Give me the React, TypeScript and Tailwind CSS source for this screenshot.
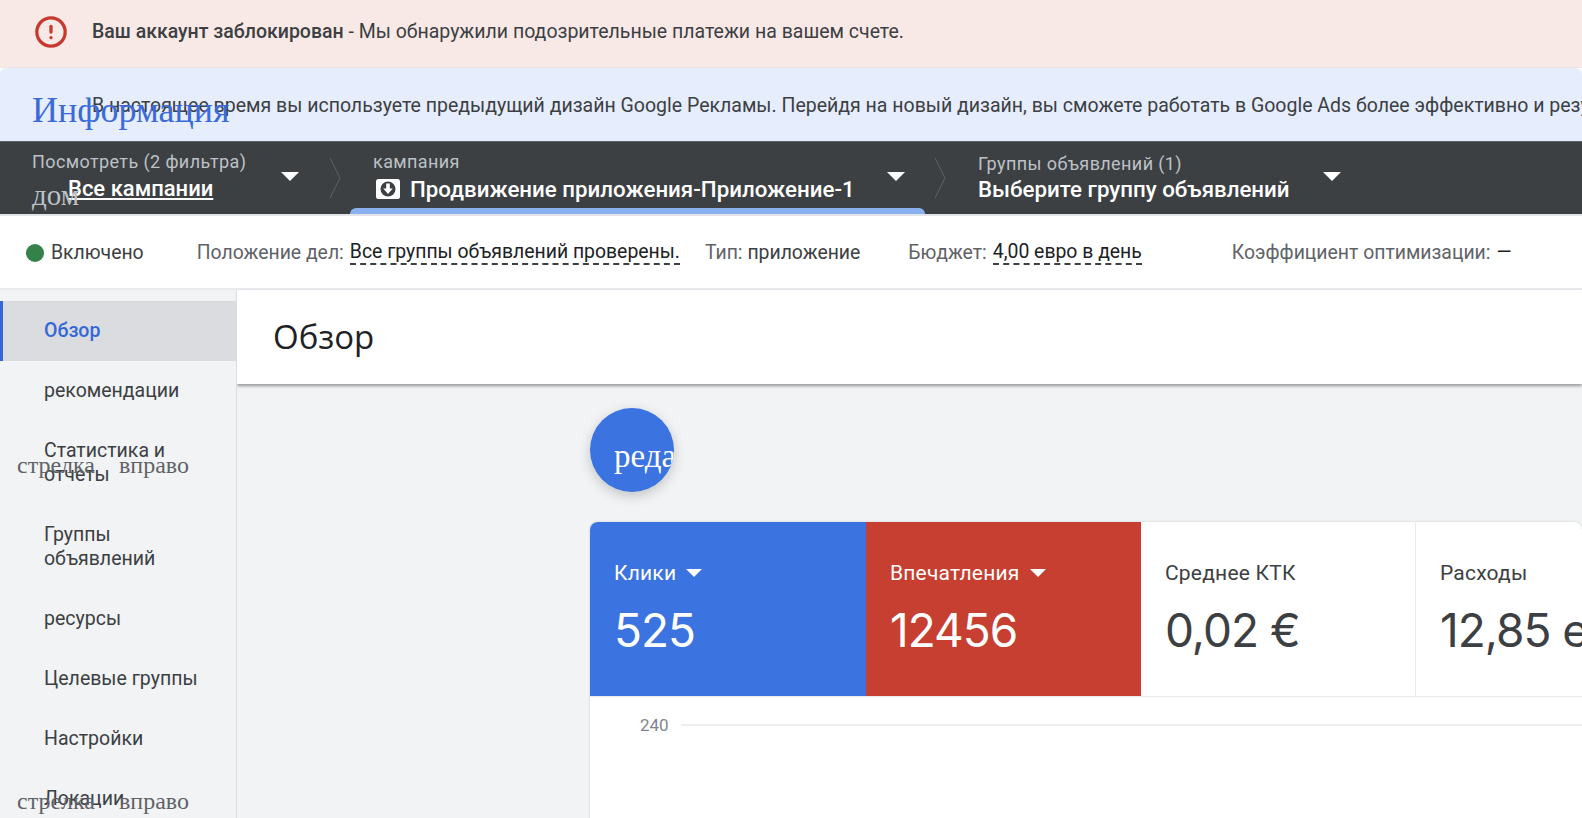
import { CircleAlert } from 'lucide-react'

const navItems = [
  { label: 'рекомендации' },
  { label: 'Статистика и отчеты', double: true, arrow: true },
  { label: 'Группы объявлений', double: true },
  { label: 'ресурсы' },
  { label: 'Целевые группы' },
  { label: 'Настройки' },
  { label: 'Локации', arrow: true },
]

function Caret({ className }: { className?: string }) {
  return (
    <svg className={className} width="18" height="9" viewBox="0 0 18 9" fill="currentColor">
      <path d="M0 0h18L9 9z" />
    </svg>
  )
}

function Crumb() {
  return (
    <svg className="shrink-0" width="12" height="42" viewBox="0 0 12 42" fill="none" stroke="#5f6368" strokeWidth="1">
      <path d="M1 1l10 20L1 41" />
    </svg>
  )
}

function Metric({ label, value, tone, caret }: { label: string; value: string; tone: string; caret?: boolean }) {
  return (
    <div className={`flex h-full shrink-0 flex-col pl-6 pt-[39px] ${tone}`}>
      <div className="flex items-center gap-[10px] text-[21px] leading-6 tracking-[0.2px]">
        <span>{label}</span>
        {caret && <Caret className="h-2 w-4" />}
      </div>
      <div className="mt-[17px] font-['Inter',sans-serif] text-[46px] leading-[56px] font-normal tracking-[-1px] whitespace-nowrap">{value}</div>
    </div>
  )
}

export default function App() {
  return (
    <div className="flex h-[818px] w-full flex-col overflow-hidden bg-white font-['Roboto',sans-serif] text-[19.5px] text-[#3c4043]">
      <div className="flex h-[68px] shrink-0 items-center border-b border-[#ece4e6] bg-[#f9e9e6] pb-[4px]">
        <CircleAlert className="ml-[34px] text-[#c5392f]" size={34} strokeWidth={2.3} />
        <div className="ml-[24px] pt-[1px] whitespace-nowrap">
          <span className="font-medium">Ваш аккаунт заблокирован</span> - Мы обнаружили подозрительные платежи на вашем счете.
        </div>
      </div>

      <div className="relative flex h-[73px] shrink-0 items-center overflow-hidden rounded-t-md bg-[#e6edfc] pt-[3px] pl-[92px]">
        <div className="whitespace-nowrap">
          В настоящее время вы используете предыдущий дизайн Google Рекламы. Перейдя на новый дизайн, вы сможете работать в Google Ads более эффективно и результативно.
        </div>
        <span className="absolute top-[22px] left-[32px] font-['Liberation_Serif',serif] text-[36px] leading-10 text-[#3a6bd8]">Информация</span>
      </div>

      <div className="flex h-[73px] shrink-0 items-center overflow-hidden border-t border-[#5f6368] bg-[#3c4043] text-white">
        <div className="relative flex h-full w-[329px] shrink-0 pl-8">
          <div className="flex flex-col pt-[8px]">
            <span className="text-[18px] leading-6 tracking-[0.4px] text-[#bdc1c6]">Посмотреть (2 фильтра)</span>
            <a className="mt-[3px] ml-9 text-[22px] leading-6 font-medium underline underline-offset-2">Все кампании</a>
          </div>
          <Caret className="absolute top-[30px] left-[281px]" />
          <span className="absolute top-[37px] left-[32px] font-['Liberation_Serif',serif] text-[29px] leading-8 text-[#bdc1c6]">дом</span>
        </div>
        <Crumb />
        <div className="relative ml-[9px] flex h-full w-[575px] shrink-0 pl-[23px]">
          <div className="flex flex-col pt-[8px]">
            <span className="text-[18px] leading-6 tracking-[0.4px] text-[#bdc1c6]">кампания</span>
            <div className="mt-[3px] flex items-center text-[22.3px] leading-6 font-medium whitespace-nowrap">
              <svg className="ml-[3px] mr-[10px]" width="24" height="20" viewBox="0 0 24 20">
                <rect width="24" height="20" rx="2.5" fill="#fff" />
                <circle cx="12" cy="10" r="7.5" fill="#3c4043" />
                <path d="M10.2 4.500h3.600v5h3L12 15l-4.800-5.500h3z" fill="#fff" />
              </svg>
              Продвижение приложения-Приложение-1
            </div>
          </div>
          <Caret className="absolute top-[30px] left-[537px]" />
          <div className="absolute right-0 bottom-0 left-0 h-[6px] rounded-t-md bg-[#8ab0f0]" />
        </div>
        <div className="ml-[9px]">
          <Crumb />
        </div>
        <div className="relative ml-[32px] flex h-full flex-1 flex-col pt-[10px]">
          <span className="text-[18px] leading-6 tracking-[0.4px] text-[#bdc1c6]">Группы объявлений (1)</span>
          <span className="mt-[1px] text-[22.3px] leading-6 font-medium whitespace-nowrap">Выберите группу объявлений</span>
          <Caret className="absolute top-[30px] left-[345px]" />
        </div>
      </div>

      <div className="flex h-[76px] shrink-0 items-center border-t-2 border-b-2 border-t-[#e3e5e8] border-b-[#e8eaed] pt-[1px] pl-[26px] text-[19.4px] whitespace-nowrap text-[#5f6368]">
        <span className="h-[18px] w-[18px] rounded-full bg-[#34824a]" />
        <span className="ml-[7px] text-[#3c4043]">Включено</span>
        <span className="ml-[53px]">Положение дел:</span>
        <span className="ml-[6px] border-b-2 border-dashed border-[#3c4043] leading-[23px] text-[#202124]">Все группы объявлений проверены.</span>
        <span className="ml-[25px]">Тип: <span className="text-[#3c4043]">приложение</span></span>
        <span className="ml-[48px]">Бюджет:</span>
        <span className="ml-[6px] border-b-2 border-dashed border-[#3c4043] leading-[23px] text-[#202124]">4,00 евро в день</span>
        <span className="ml-[90px]">Коэффициент оптимизации:</span>
        <span className="ml-[6px] text-[#202124]">—</span>
      </div>

      <div className="flex min-h-0 flex-1">
        <nav className="relative w-[237px] shrink-0 border-r border-[#dadce0] bg-[#f1f3f4] pt-[11px]">
          <div className="flex h-[60px] items-center border-l-[3px] border-[#3367d6] bg-[#dadce0] pl-[41px] font-medium text-[#3367d6]">Обзор</div>
          {navItems.map(item => (
            <div
              key={item.label}
              className={`relative flex items-center pl-[44px] pr-[34px] leading-6 ${item.double ? 'h-[84px]' : 'h-[60px]'}`}
            >
              {item.label}
              {item.arrow && (
                <span className="absolute top-1/2 left-[17px] mt-0.5 -translate-y-1/2 font-['Liberation_Serif',serif] text-[24px] leading-7 whitespace-pre text-[#5f6368]">
                  стрелка    вправо
                </span>
              )}
            </div>
          ))}
        </nav>

        <main className="flex min-w-0 flex-1 flex-col bg-[#f1f3f4]">
          <div className="flex h-[94px] shrink-0 items-center bg-white pl-[36px] font-['Open_Sans',sans-serif] text-[33px] text-[#202124] shadow-[0_2px_3px_rgba(60,64,67,0.5)]">Обзор</div>
          <div className="pl-[353px]">
            <div className="mt-[24px] flex h-[84px] w-[84px] items-center overflow-hidden rounded-full bg-[#3b73e1] pt-[14px] pl-6 font-['Liberation_Serif',serif] text-[33px] whitespace-nowrap text-white shadow-[0_4px_12px_rgba(60,64,67,0.25)]">
              редактировать
            </div>
            <div className="mt-[30px] h-[300px] overflow-hidden rounded-t-lg bg-white shadow-[0_0_2px_rgba(60,64,67,0.25)]">
              <div className="flex h-[175px] border-b border-[#e8eaed]">
                <Metric label="Клики" value="525" tone="w-[276px] bg-[#3b73e1] text-white" caret />
                <Metric label="Впечатления" value="12456" tone="w-[275px] bg-[#c63f30] text-white" caret />
                <Metric label="Среднее КТК" value="0,02 €" tone="w-[275px] border-r border-[#e8eaed] text-[#3c4043]" />
                <Metric label="Расходы" value="12,85 евро" tone="w-[275px] text-[#3c4043]" />
              </div>
              <div className="flex items-center pt-[18px] pl-[50px]">
                <span className="text-[17px] leading-5 text-[#80868b]">240</span>
                <div className="ml-[12px] h-[2px] flex-1 bg-[#eceef0]" />
              </div>
            </div>
          </div>
        </main>
      </div>
    </div>
  )
}
